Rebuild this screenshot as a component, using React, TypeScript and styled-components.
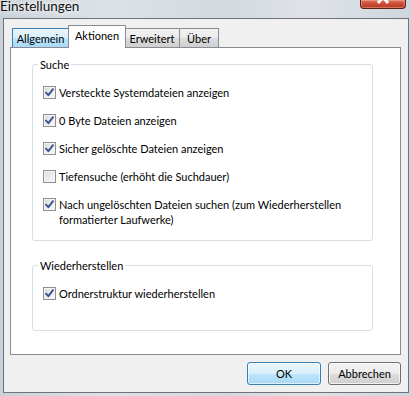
import React from 'react';
import styled, { createGlobalStyle } from 'styled-components';

const FONT = `"Segoe UI", Lato, "Noto Sans", sans-serif`;

const Global = createGlobalStyle`
  html, body { margin: 0; padding: 0; }
  body {
    width: 411px;
    height: 396px;
    overflow: hidden;
    font-family: ${FONT};
    font-size: 11px;
    color: #000;
  }
`;

const Window = styled.div`
  width: 411px;
  height: 396px;
  display: flex;
  flex-direction: column;
  background: linear-gradient(90deg, #c9d1da 0%, #dde2e7 25%, #d3d9df 55%, #dfe3e7 75%, #cfd6de 100%);
  overflow: hidden;
`;

const TitleBar = styled.div`
  height: 18px;
  flex: none;
  display: flex;
  justify-content: space-between;
  align-items: flex-start;
  overflow: hidden;
`;

const Title = styled.div`
  font-size: 13.5px;
  line-height: 14px;
  margin-top: -1px;
  padding-left: 0;
  color: #111;
  text-shadow: 0 0 8px #fff, 0 0 4px #fff;
`;

const CloseButton = styled.div`
  width: 44px;
  height: 8px;
  margin-right: 5px;
  border: 1px solid #5a1f15;
  border-top: none;
  border-radius: 0 0 4px 4px;
  background: linear-gradient(180deg, #d9745e 0%, #c9452c 60%, #b43a22 100%);
  box-shadow: inset 0 0 0 1px rgba(255, 190, 170, 0.45);
  display: flex;
  justify-content: center;
  align-items: flex-end;
  overflow: hidden;
`;

const Client = styled.div`
  flex: 1;
  margin: 0 2px 3px 3px;
  border: 1px solid #6f7378;
  background: #f0f0f0;
  display: flex;
  flex-direction: column;
  padding: 6px 7px 7px 6px;
  min-height: 0;
`;

const TabStrip = styled.div`
  height: 22px;
  flex: none;
  display: flex;
  align-items: flex-end;
  padding-left: 2px;
  position: relative;
  z-index: 1;
`;

const Tab = styled.div<{ $w: number; $active?: boolean; $hover?: boolean }>`
  box-sizing: border-box;
  width: ${(p) => p.$w}px;
  height: ${(p) => (p.$active ? 23 : 19)}px;
  margin-left: -1px;
  margin-bottom: ${(p) => (p.$active ? -1 : 0)}px;
  margin-right: ${(p) => (p.$active ? -1 : 0)}px;
  border: 1px solid ${(p) => (p.$hover ? '#3c7fb1' : '#898c95')};
  border-bottom: none;
  border-radius: 1px 1px 0 0;
  background: ${(p) =>
    p.$active
      ? '#ffffff'
      : p.$hover
      ? 'linear-gradient(180deg, #eaf6fd 0%, #d9f0fc 50%, #bee6fd 51%, #a7d9f5 100%)'
      : 'linear-gradient(180deg, #f2f2f2 0%, #ebebeb 50%, #dddddd 51%, #cfcfcf 100%)'};
  display: flex;
  justify-content: center;
  align-items: center;
  padding-bottom: ${(p) => (p.$active ? 3 : 0)}px;
  line-height: 15px;
  white-space: nowrap;
  position: relative;
  z-index: ${(p) => (p.$active ? 2 : 1)};
  &:first-child { margin-left: 0; }
`;

const Panel = styled.div`
  box-sizing: border-box;
  height: 308px;
  flex: none;
  border: 1px solid #898c95;
  background: #fff;
  padding: 9px 0 0 21px;
  display: flex;
  flex-direction: column;
`;

const Group = styled.fieldset<{ $gapTop: number; $padBottom: number }>`
  box-sizing: border-box;
  width: 341px;
  margin: ${(p) => p.$gapTop}px 0 0 0;
  padding: 13px 10px ${(p) => p.$padBottom}px 10px;
  border: 1px solid #d5dfe5;
  border-radius: 3px;
  display: flex;
  flex-direction: column;
  gap: 13px;
  min-width: 0;
`;

const Legend = styled.legend`
  padding: 0 2px;
  margin-left: -5px;
  line-height: 15px;
  font-size: 11px;
`;

const Row = styled.label`
  display: flex;
  align-items: flex-start;
  gap: 3px;
  line-height: 15px;
  white-space: nowrap;
`;

const Box = styled.span`
  box-sizing: border-box;
  width: 13px;
  height: 13px;
  flex: none;
  margin-top: 1px;
  border: 1px solid #8e8f8f;
  background: linear-gradient(135deg, #dcdcdc 0%, #ebebeb 50%, #fbfbfb 100%);
  box-shadow: inset 0 0 0 1px #f4f4f4;
  display: flex;
  align-items: center;
  justify-content: center;
`;

const ButtonRow = styled.div`
  margin-top: 7px;
  display: flex;
  justify-content: flex-end;
  gap: 7px;
`;

const Button = styled.div<{ $w: number; $default?: boolean }>`
  box-sizing: border-box;
  width: ${(p) => p.$w}px;
  height: 23px;
  border: 1px solid ${(p) => (p.$default ? '#3c7fb1' : '#707070')};
  border-radius: 3px;
  background: ${(p) =>
    p.$default
      ? 'linear-gradient(180deg, #eaf6fd 0%, #d9f0fc 50%, #bee6fd 51%, #a7d9f5 100%)'
      : 'linear-gradient(180deg, #f2f2f2 0%, #ebebeb 50%, #dddddd 51%, #cfcfcf 100%)'};
  box-shadow: inset 0 0 0 1px ${(p) => (p.$default ? 'rgba(255,255,255,0.6)' : 'rgba(255,255,255,0.7)')};
  display: flex;
  align-items: center;
  justify-content: center;
  line-height: 15px;
`;

const Check = () => (
  <svg width="9" height="9" viewBox="0 0 9 9">
    <path d="M1 4.6 L3.4 7.2 L8 1.2" fill="none" stroke="#3c5392" strokeWidth="1.9" strokeLinecap="round" strokeLinejoin="round" />
  </svg>
);

const CheckRow: React.FC<{ checked?: boolean; children: React.ReactNode }> = ({ checked, children }) => (
  <Row>
    <Box>{checked && <Check />}</Box>
    <span>{children}</span>
  </Row>
);

export default function App() {
  return (
    <>
      <Global />
      <Window>
        <TitleBar>
          <Title>Einstellungen</Title>
          <CloseButton>
            <svg width="14" height="12" viewBox="0 0 14 12" style={{ marginBottom: 1 }}>
              <path d="M2 -4 L12 8 M12 -4 L2 8" stroke="#fff" strokeWidth="3" />
            </svg>
          </CloseButton>
        </TitleBar>
        <Client>
          <TabStrip>
            <Tab $w={57} $hover>Allgemein</Tab>
            <Tab $w={58} $active>Aktionen</Tab>
            <Tab $w={56}>Erweitert</Tab>
            <Tab $w={40}>Über</Tab>
          </TabStrip>
          <Panel>
            <Group $gapTop={0} $padBottom={13}>
              <Legend>Suche</Legend>
              <CheckRow checked>Versteckte Systemdateien anzeigen</CheckRow>
              <CheckRow checked>0 Byte Dateien anzeigen</CheckRow>
              <CheckRow checked>Sicher gelöschte Dateien anzeigen</CheckRow>
              <CheckRow>Tiefensuche (erhöht die Suchdauer)</CheckRow>
              <CheckRow checked>
                Nach ungelöschten Dateien suchen (zum Wiederherstellen
                <br />
                formatierter Laufwerke)
              </CheckRow>
            </Group>
            <Group $gapTop={17} $padBottom={29}>
              <Legend>Wiederherstellen</Legend>
              <CheckRow checked>Ordnerstruktur wiederherstellen</CheckRow>
            </Group>
          </Panel>
          <ButtonRow>
            <Button $w={74} $default>OK</Button>
            <Button $w={73}>Abbrechen</Button>
          </ButtonRow>
        </Client>
      </Window>
    </>
  );
}
